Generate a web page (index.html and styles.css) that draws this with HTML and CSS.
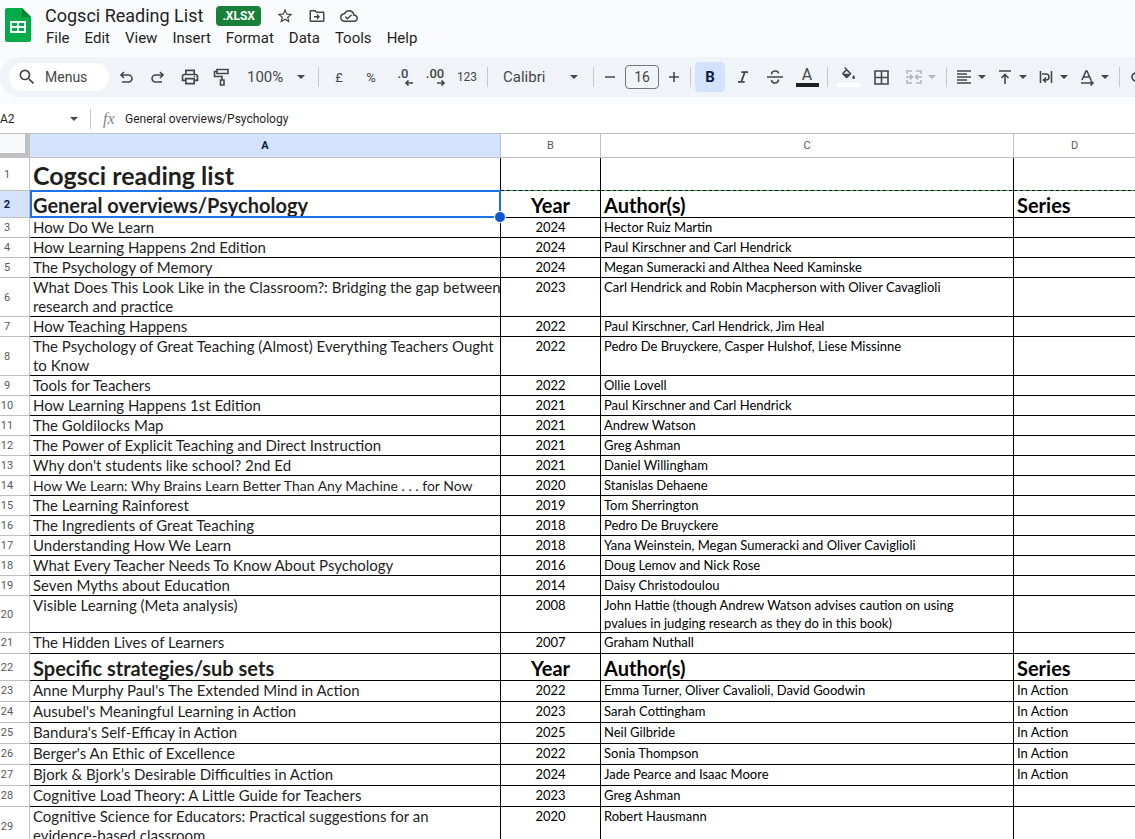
FILE: index.html
```html
<!DOCTYPE html>
<html lang="en">
<head>
  <meta charset="utf-8">
  <title>Cogsci Reading List</title>
  <link rel="stylesheet" href="styles.css">
</head>
<body>
  <header class="titlebar">
    <svg class="logo" width="26" height="34" viewBox="0 0 26 34">
      <path fill="#00ac47" d="M2 0h15l9 9v23a2 2 0 0 1-2 2H2a2 2 0 0 1-2-2V2a2 2 0 0 1 2-2z"/>
      <path fill="#00832d" d="M17 0l9 9h-9z"/>
      <path fill="#fff" fill-rule="evenodd" d="M5 13h16v12H5zM7 15v3h5v-3zM14 15v3h5v-3zM7 20v3h5v-3zM14 20v3h5v-3z"/>
    </svg>
    <div>
      <div class="doc">
        <h1>Cogsci Reading List</h1>
        <span class="badge">.XLSX</span>
        <button class="doc-btn" aria-label="Star"><svg width="20" height="20" viewBox="0 0 24 24"><path d="M22 9.24l-7.19-.62L12 2 9.19 8.63 2 9.24l5.46 4.73L5.82 21 12 17.27 18.18 21l-1.63-7.03L22 9.24zM12 15.4l-3.76 2.27 1-4.28-3.32-2.88 4.38-.38L12 6.1l1.71 4.04 4.38.38-3.32 2.88 1 4.28L12 15.4z"/></svg></button>
        <button class="doc-btn" aria-label="Move"><svg width="20" height="20" viewBox="0 0 24 24"><path d="M20 6h-8l-2-2H4c-1.1 0-2 .9-2 2v12c0 1.1.9 2 2 2h16c1.1 0 2-.9 2-2V8c0-1.1-.9-2-2-2zm0 12H4V6h5.2l2 2H20v10zm-8-1l4-4-4-4v3H8v2h4z"/></svg></button>
        <button class="doc-btn" aria-label="Saved"><svg width="20" height="20" viewBox="0 0 24 24"><path d="M19.35 10.04A7.49 7.49 0 0 0 12 4C9.11 4 6.6 5.64 5.35 8.04A5.994 5.994 0 0 0 0 14c0 3.31 2.69 6 6 6h13c2.76 0 5-2.24 5-5 0-2.64-2.05-4.78-4.65-4.96zM19 18H6c-2.21 0-4-1.79-4-4 0-2.05 1.53-3.76 3.56-3.97l1.07-.11.5-.95A5.469 5.469 0 0 1 12 6c2.62 0 4.88 1.86 5.39 4.43l.3 1.5 1.53.11A2.98 2.98 0 0 1 22 15c0 1.65-1.35 3-3 3zm-9-3.82l-2.09-2.09L6.5 13.5 10 17l6.01-6.01-1.41-1.41z"/></svg></button>
      </div>
      <nav class="menu">
        <a href="#">File</a>
        <a href="#">Edit</a>
        <a href="#">View</a>
        <a href="#">Insert</a>
        <a href="#">Format</a>
        <a href="#">Data</a>
        <a href="#">Tools</a>
        <a href="#">Help</a>
      </nav>
    </div>
  </header>

  <div class="toolbar">
    <label class="search">
      <svg width="20" height="20" viewBox="0 0 24 24"><path d="M15.5 14h-.79l-.28-.27A6.471 6.471 0 0 0 16 9.5 6.5 6.5 0 1 0 9.5 16c1.61 0 3.09-.59 4.23-1.57l.27.28v.79l5 4.99L20.49 19l-4.99-5zm-6 0C7.01 14 5 11.99 5 9.5S7.01 5 9.5 5 14 7.01 14 9.5 11.99 14 9.5 14z"/></svg>
      <input type="text" placeholder="Menus" aria-label="Menus">
    </label>
    <button aria-label="Undo"><svg class="line" width="20" height="20" viewBox="0 0 20 20"><path d="M8 5L5 8l3 3M5 8h7.5a3.5 3.5 0 0 1 0 7H6"/></svg></button>
    <button aria-label="Redo"><svg class="line" width="20" height="20" viewBox="0 0 20 20"><path d="M12 5l3 3-3 3M15 8H7.500a3.500 3.500 0 0 0 0 7H14"/></svg></button>
    <button aria-label="Print"><svg width="20" height="20" viewBox="0 0 24 24"><path d="M19 8h-1V3H6v5H5c-1.660 0-3 1.340-3 3v6h4v4h12v-4h4v-6c0-1.660-1.340-3-3-3zM8 5h8v3H8V5zm8 12v2H8v-4h8v2zm2-2v-2H6v2H4v-4c0-.55.45-1 1-1h14c.55 0 1 .45 1 1v4h-2z"/><circle cx="17.500" cy="11.500" r="1"/></svg></button>
    <button aria-label="Paint format"><svg class="line" width="20" height="20" viewBox="0 0 20 20"><path d="M5 2.500h11v4H5zM5 4.500H2.500v5H10V13M8.500 13h3.500v5H8.500z"/></svg></button>
    <div class="drop zoom">
      <select aria-label="Zoom"><option>100%</option></select>
    </div>
    <i class="sep"></i>
    <button class="txt">£</button>
    <button class="txt">%</button>
    <button class="dec" aria-label="Decrease decimal places">.0<svg class="line" width="10" height="6" viewBox="0 0 10 6"><path d="M9 3H2M4.500 0.500L2 3l2.500 2.500"/></svg></button>
    <button class="dec" aria-label="Increase decimal places">.00<svg class="line" width="10" height="6" viewBox="0 0 10 6"><path d="M1 3h7M5.500 0.500L8 3 5.500 5.500"/></svg></button>
    <button class="num">123</button>
    <i class="sep"></i>
    <div class="drop font">
      <select aria-label="Font"><option>Calibri</option></select>
    </div>
    <i class="sep"></i>
    <button class="step" aria-label="Decrease font size"><svg class="line" width="20" height="20" viewBox="0 0 20 20"><path d="M5 10h10"/></svg></button>
    <input class="size" type="text" value="16" aria-label="Font size">
    <button class="step" aria-label="Increase font size"><svg class="line" width="20" height="20" viewBox="0 0 20 20"><path d="M5 10h10M10 5v10"/></svg></button>
    <i class="sep"></i>
    <button class="bold on">B</button>
    <button aria-label="Italic"><svg width="20" height="20" viewBox="0 0 24 24"><path d="M10 5v2.200h2.700l-3.600 9.600H6V19h8v-2.200h-2.600l3.600-9.600H18V5z"/></svg></button>
    <button aria-label="Strikethrough"><svg class="line" width="20" height="20" viewBox="0 0 20 20"><path d="M2 10h16M6.500 7.500C6.500 3 13.500 3 13.500 6.500M6.500 13c0 4 7 4 7-0.500"/></svg></button>
    <button class="color">A</button>
    <i class="sep"></i>
    <button class="color fill" aria-label="Fill color"><svg width="16" height="16" viewBox="0 0 24 24"><path d="M16.560 8.940L7.620 0 6.210 1.410l2.380 2.380-5.150 5.150a1.490 1.490 0 0 0 0 2.120l5.500 5.500c.29.29.68.44 1.060.44s.77-.15 1.060-.44l5.500-5.500c.59-.58.59-1.530 0-2.120zM5.500 10L10 5.500 14.500 10zM20.500 12s-2 2.670-2 4a2 2 0 0 0 4 0c0-1.330-2-4-2-4z"/></svg></button>
    <button aria-label="Borders"><svg class="line" width="20" height="20" viewBox="0 0 20 20"><path d="M5 4h13v13H5zM11.500 4v13M5 10.500h13"/></svg></button>
    <button class="combo merge" aria-label="Merge cells" disabled><svg class="line" width="20" height="20" viewBox="0 0 20 20"><path d="M8 4H3v3M12 4h5v3M8 16H3v-3M12 16h5v-3M2 10h6M6 7.500L8.500 10 6 12.500M18 10h-6M14 7.500L11.500 10l2.500 2.500"/></svg></button>
    <i class="sep"></i>
    <button class="combo" aria-label="Horizontal align"><svg class="line" width="20" height="20" viewBox="0 0 20 20"><path d="M3 4h14M3 7h10M3 10h14M3 13h10M3 16h14"/></svg></button>
    <button class="combo" aria-label="Vertical align"><svg class="line" width="20" height="20" viewBox="0 0 20 20"><path d="M4 4h12M10 17V7.500M6.500 11L10 7.500l3.500 3.500"/></svg></button>
    <button class="combo" aria-label="Text wrapping"><svg class="line" width="20" height="20" viewBox="0 0 20 20"><path d="M4.500 4v12M15.500 4v12M6 7h4a3 3 0 0 1 0 6H8M10 10.500L7.500 13l2.500 2.500"/></svg></button>
    <button class="combo" aria-label="Text rotation"><svg class="line" width="20" height="20" viewBox="0 0 20 20"><path d="M5 13L9 4h1l4 9M6.500 10h6M4 16h12M13.500 13.500L16 16l-2.500 2.500"/></svg></button>
    <i class="sep"></i>
    <button aria-label="Insert link"><svg class="line" width="20" height="20" viewBox="0 0 20 20"><path d="M9 6H6a4 4 0 0 0 0 8h3M6 10h8M11 6h3a4 4 0 0 1 0 8h-3"/></svg></button>
  </div>

  <div class="formula">
    <div class="drop name">
      <input type="text" value="A2" aria-label="Name box">
    </div>
    <i class="sep"></i>
    <label class="fx" for="formula-input">fx</label>
    <input id="formula-input" type="text" value="General overviews/Psychology">
  </div>

  <main>
    <table>
      <colgroup>
        <col class="col-n"><col class="col-a"><col class="col-b"><col class="col-c"><col>
      </colgroup>
      <thead>
        <tr><th class="corner"></th><th class="on">A</th><th>B</th><th>C</th><th>D</th></tr>
      </thead>
      <tbody>
        <tr class="first"><th>1</th><td>Cogsci reading list</td><td></td><td></td><td></td></tr>
        <tr class="section on"><th>2</th><td class="active">General overviews/Psychology</td><td>Year</td><td>Author(s)</td><td>Series</td></tr>
        <tr><th>3</th><td>How Do We Learn</td><td>2024</td><td>Hector Ruiz Martin</td><td></td></tr>
        <tr><th>4</th><td>How Learning Happens 2nd Edition</td><td>2024</td><td>Paul Kirschner and Carl Hendrick</td><td></td></tr>
        <tr><th>5</th><td>The Psychology of Memory</td><td>2024</td><td>Megan Sumeracki and Althea Need Kaminske</td><td></td></tr>
        <tr><th>6</th><td>What Does This Look Like in the Classroom?: Bridging the gap between<br>research and practice</td><td>2023</td><td>Carl Hendrick and Robin Macpherson with Oliver Cavaglioli</td><td></td></tr>
        <tr><th>7</th><td>How Teaching Happens</td><td>2022</td><td>Paul Kirschner, Carl Hendrick, Jim Heal</td><td></td></tr>
        <tr><th>8</th><td>The Psychology of Great Teaching (Almost) Everything Teachers Ought<br>to Know</td><td>2022</td><td>Pedro De Bruyckere, Casper Hulshof, Liese Missinne</td><td></td></tr>
        <tr><th>9</th><td>Tools for Teachers</td><td>2022</td><td>Ollie Lovell</td><td></td></tr>
        <tr><th>10</th><td>How Learning Happens 1st Edition</td><td>2021</td><td>Paul Kirschner and Carl Hendrick</td><td></td></tr>
        <tr><th>11</th><td>The Goldilocks Map</td><td>2021</td><td>Andrew Watson</td><td></td></tr>
        <tr><th>12</th><td>The Power of Explicit Teaching and Direct Instruction</td><td>2021</td><td>Greg Ashman</td><td></td></tr>
        <tr><th>13</th><td>Why don't students like school? 2nd Ed</td><td>2021</td><td>Daniel Willingham</td><td></td></tr>
        <tr class="long"><th>14</th><td>How We Learn: Why Brains Learn Better Than Any Machine . . . for Now</td><td>2020</td><td>Stanislas Dehaene</td><td></td></tr>
        <tr><th>15</th><td>The Learning Rainforest</td><td>2019</td><td>Tom Sherrington</td><td></td></tr>
        <tr><th>16</th><td>The Ingredients of Great Teaching</td><td>2018</td><td>Pedro De Bruyckere</td><td></td></tr>
        <tr><th>17</th><td>Understanding How We Learn</td><td>2018</td><td>Yana Weinstein, Megan Sumeracki and Oliver Caviglioli</td><td></td></tr>
        <tr><th>18</th><td>What Every Teacher Needs To Know About Psychology</td><td>2016</td><td>Doug Lemov and Nick Rose</td><td></td></tr>
        <tr><th>19</th><td>Seven Myths about Education</td><td>2014</td><td>Daisy Christodoulou</td><td></td></tr>
        <tr><th>20</th><td>Visible Learning (Meta analysis)</td><td>2008</td><td>John Hattie (though Andrew Watson advises caution on using<br>pvalues in judging research as they do in this book)</td><td></td></tr>
        <tr class="tall"><th>21</th><td>The Hidden Lives of Learners</td><td>2007</td><td>Graham Nuthall</td><td></td></tr>
        <tr class="section"><th>22</th><td>Specific strategies/sub sets</td><td>Year</td><td>Author(s)</td><td>Series</td></tr>
        <tr class="tall"><th>23</th><td>Anne Murphy Paul's The Extended Mind in Action</td><td>2022</td><td>Emma Turner, Oliver Cavalioli, David Goodwin</td><td>In Action</td></tr>
        <tr class="tall"><th>24</th><td>Ausubel's Meaningful Learning in Action</td><td>2023</td><td>Sarah Cottingham</td><td>In Action</td></tr>
        <tr class="tall"><th>25</th><td>Bandura's Self-Efficay in Action</td><td>2025</td><td>Neil Gilbride</td><td>In Action</td></tr>
        <tr class="tall"><th>26</th><td>Berger's An Ethic of Excellence</td><td>2022</td><td>Sonia Thompson</td><td>In Action</td></tr>
        <tr class="tall"><th>27</th><td>Bjork &amp; Bjork’s Desirable Difficulties in Action</td><td>2024</td><td>Jade Pearce and Isaac Moore</td><td>In Action</td></tr>
        <tr class="tall"><th>28</th><td>Cognitive Load Theory: A Little Guide for Teachers</td><td>2023</td><td>Greg Ashman</td><td></td></tr>
        <tr><th>29</th><td>Cognitive Science for Educators: Practical suggestions for an<br>evidence-based classroom</td><td>2020</td><td>Robert Hausmann</td><td></td></tr>
      </tbody>
    </table>
  </main>
</body>
</html>
```

FILE: styles.css
```css
* {
  box-sizing: border-box;
}
body {
  margin: 0;
  height: 100vh;
  overflow: hidden;
  display: flex;
  flex-direction: column;
  background: #f9fbfd;
  font-family: Roboto, "Liberation Sans", sans-serif;
  color: #1f1f1f;
}
button, input, select {
  font: inherit;
  color: inherit;
  border: 0;
  padding: 0;
  background: none;
  outline: none;
}
button {
  cursor: pointer;
}
svg {
  display: block;
  flex: none;
  fill: #444746;
}
svg.line {
  fill: none;
  stroke: #444746;
  stroke-width: 1.6;
}

/* title and menus */
.titlebar {
  display: flex;
  padding: 5px 5px 8px;
  gap: 6px;
}
.logo {
  margin-top: 3px;
}
.doc {
  display: flex;
  align-items: center;
  height: 22px;
  padding-left: 8px;
}
h1 {
  margin: 0 13px 0 0;
  font-size: 18px;
  font-weight: 400;
  line-height: 22px;
}
.badge {
  padding: 0 6px;
  margin-right: 8px;
  border-radius: 4px;
  background: #188038;
  color: #fff;
  font-size: 12px;
  font-weight: 700;
  line-height: 20px;
}
.doc-btn {
  width: 32px;
  display: flex;
  justify-content: center;
}
.doc-btn svg {
  width: 18px;
  height: 18px;
}
.menu {
  display: flex;
  gap: 15px;
  padding-left: 9px;
  line-height: 22px;
  font-size: 15px;
}
.menu a {
  color: #1f1f1f;
  text-decoration: none;
}

/* toolbar */
.toolbar {
  display: flex;
  align-items: center;
  flex: none;
  height: 40px;
  padding-left: 9px;
  margin-bottom: 7px;
  overflow: hidden;
  background: #f0f4f9;
  border-radius: 24px 0 0 24px;
  color: #444746;
}
.toolbar > * {
  flex: none;
}
.toolbar button {
  display: flex;
  align-items: center;
  justify-content: center;
  width: 30px;
  height: 30px;
  margin: 0 1px;
  border-radius: 4px;
}
.search {
  display: flex;
  align-items: center;
  gap: 8px;
  width: 100px;
  height: 28px;
  margin-right: 1px;
  padding-left: 8px;
  border-radius: 14px;
  background: #fff;
  font-size: 14px;
}
.search input {
  width: 56px;
}
.search input::placeholder {
  color: #444746;
  opacity: 1;
}
.sep {
  width: 1px;
  height: 20px;
  margin: 0 4px;
  background: #c7c7c7;
}
.drop {
  display: flex;
  align-items: center;
  justify-content: space-between;
}
.drop select {
  appearance: none;
}
.drop::after, .combo::after {
  content: "";
  border: 4px solid transparent;
  border-top-color: #444746;
  border-bottom: 0;
}
.zoom {
  width: 76px;
  padding: 0 9px;
  font-size: 15px;
}
.font {
  width: 97px;
  padding: 0 11px;
  font-size: 15px;
}
.toolbar .txt {
  font-size: 13px;
}
.toolbar .num {
  font-size: 12px;
}
.toolbar .dec {
  flex-direction: column;
  font-size: 13px;
  font-weight: 500;
  line-height: 12px;
}
.dec svg {
  align-self: flex-end;
  margin-right: 4px;
}
.toolbar .step {
  width: 22px;
}
.size {
  width: 34px;
  height: 24px;
  margin: 0 3px;
  border: 1px solid #747775;
  border-radius: 4px;
  text-align: center;
  font-size: 14px;
}
.toolbar .bold {
  margin: 0 2px 0 0;
  font-size: 15px;
  font-weight: 700;
}
.toolbar .on {
  background: #d3e3fd;
  color: #041e49;
}
.toolbar .color {
  flex-direction: column;
  font-size: 16px;
  line-height: 16px;
}
.color::after {
  content: "";
  width: 23px;
  height: 4px;
  background: #1f1f1f;
}
.color.fill::after {
  background: #fff;
}
.toolbar .combo {
  width: 41px;
  margin: 0;
  padding-left: 3px;
  gap: 4px;
  justify-content: flex-start;
}
.toolbar .merge {
  margin-left: 5px;
  opacity: 0.35;
}

/* formula bar */
.formula {
  display: flex;
  align-items: center;
  flex: none;
  height: 29px;
  background: #fff;
  font-size: 12px;
}
.name {
  width: 78px;
  margin-right: 8px;
}
.name input {
  width: 50px;
}
.fx {
  width: 18px;
  margin-left: 8px;
  margin-right: 4px;
  color: #80868b;
  font: italic 16px "Liberation Serif", serif;
}
#formula-input {
  flex: 1;
}

/* sheet */
main {
  flex: 1;
  overflow: hidden;
  background: #fff;
  border-top: 1px solid #c0c0c0;
}
table {
  width: 100%;
  table-layout: fixed;
  border-collapse: separate;
  border-spacing: 0;
}
.col-n {
  width: 30px;
}
.col-a {
  width: 471px;
}
.col-b {
  width: 100px;
}
.col-c {
  width: 413px;
}
th {
  padding: 0;
  border-right: 1px solid #c0c0c0;
  border-bottom: 1px solid #c0c0c0;
  color: #575a5a;
  font-size: 11px;
  font-weight: 400;
  line-height: 19px;
}
thead th {
  height: 24px;
}
thead th:last-child {
  border-right: 0;
}
tbody th {
  padding-right: 15px;
}
thead .on, .on th {
  background: #d3e3fd;
  color: #041e49;
  font-weight: 700;
}
.corner {
  background: #f8f9fa;
  border-right: 5px solid #c0c0c0;
  border-bottom: 5px solid #c0c0c0;
}
td {
  padding: 0 0 0 3px;
  border-right: 1px solid #000;
  border-bottom: 1px solid #000;
  vertical-align: top;
  white-space: nowrap;
  color: #000;
  font-family: Lato, sans-serif;
  font-size: 13px;
  line-height: 18px;
}
td:nth-child(2) {
  color: #1f1f1f;
  font-size: 15px;
  line-height: 19px;
}
td:nth-child(3) {
  padding: 0;
  text-align: center;
}
td:last-child {
  border-right: 0;
}
.tall th {
  line-height: 20px;
}
.long td:nth-child(2) {
  font-size: 14px;
}
.section td, .section td:nth-child(2) {
  padding-top: 2px;
  font-size: 20px;
  font-weight: 700;
  line-height: 24px;
}
.first td:nth-child(2) {
  height: 33px;
  padding-top: 2px;
  font-size: 25px;
  font-weight: 700;
  line-height: 30px;
}
/* edge of the copied range */
.first td:nth-child(n+3) {
  border-bottom: 0;
  background: repeating-linear-gradient(90deg, #000 0 3px, #34a853 3px 6px) bottom / 100% 1px no-repeat;
}
.active {
  position: relative;
}
.active::before {
  content: "";
  position: absolute;
  inset: -1px -1px -1px 0;
  border: 2px solid #1a73e8;
}
.active::after {
  content: "";
  position: absolute;
  right: -6px;
  bottom: -6px;
  width: 10px;
  height: 10px;
  border: 1px solid #fff;
  border-radius: 50%;
  background: #0b57d0;
}
```
